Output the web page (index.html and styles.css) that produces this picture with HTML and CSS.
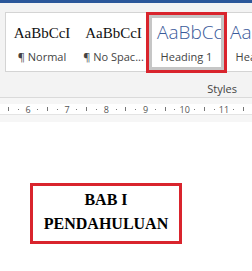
FILE: index.html
```html
<!DOCTYPE html>
<html lang="en">
<head>
    <meta charset="UTF-8">
    <meta name="viewport" content="width=device-width, initial-scale=1.0">
    <title>Styles - Heading 1</title>
    <link rel="stylesheet" href="styles.css">
</head>
<body>
    <!-- Title bar strip -->
    <div class="titlebar"></div>

    <!-- Ribbon: Styles group -->
    <div class="ribbon">
        <div class="gallery">
            <div class="style-item">
                <div class="preview">AaBbCcI</div>
                <div class="label">¶ Normal</div>
            </div>
            <div class="style-item narrow">
                <div class="preview">AaBbCcI</div>
                <div class="label">¶ No Spac...</div>
            </div>
            <div class="style-item selected">
                <div class="preview heading">AaBbCc</div>
                <div class="label">Heading 1</div>
            </div>
            <div class="style-item wide">
                <div class="preview heading">AaBbCc</div>
                <div class="label">Heading 2</div>
            </div>
        </div>
        <div class="group-label">Styles</div>
    </div>

    <!-- Ruler -->
    <div class="ruler-wrap">
        <div class="ruler">
            <span class="mark"><i class="tick"></i></span>
            <span class="mark"><i class="dot"></i></span>
            <span class="mark num">6</span>
            <span class="mark"><i class="dot"></i></span>
            <span class="mark"><i class="tick"></i></span>
            <span class="mark"><i class="dot"></i></span>
            <span class="mark num">7</span>
            <span class="mark"><i class="dot"></i></span>
            <span class="mark"><i class="tick"></i></span>
            <span class="mark"><i class="dot"></i></span>
            <span class="mark num">8</span>
            <span class="mark"><i class="dot"></i></span>
            <span class="mark"><i class="tick"></i></span>
            <span class="mark"><i class="dot"></i></span>
            <span class="mark num">9</span>
            <span class="mark"><i class="dot"></i></span>
            <span class="mark"><i class="tick"></i></span>
            <span class="mark"><i class="dot"></i></span>
            <span class="mark num">10</span>
            <span class="mark"><i class="dot"></i></span>
            <span class="mark"><i class="tick"></i></span>
            <span class="mark"><i class="dot"></i></span>
            <span class="mark num">11</span>
            <span class="mark"><i class="dot"></i></span>
            <span class="mark"><i class="tick"></i></span>
            <span class="mark"><i class="dot"></i></span>
        </div>
    </div>

    <!-- Document page -->
    <div class="page">
        <div class="chapter">BAB I<br>PENDAHULUAN</div>
    </div>
</body>
</html>
```

FILE: styles.css
```css
* {
    margin: 0;
    padding: 0;
    box-sizing: border-box;
}

body {
    width: 252px;
    height: 271px;
    overflow: hidden;
    background: #ffffff;
    font-family: 'Open Sans', 'Noto Sans', sans-serif;
}

.titlebar {
    height: 3px;
    background: #2b579a;
}

/* Ribbon */
.ribbon {
    background: #f3f3f3;
    border-bottom: 1px solid #dadada;
    height: 95px;
    padding-top: 9px;
}

.gallery {
    display: flex;
    height: 60px;
    margin-left: 5px;
    margin-right: -40px;
    padding-top: 2px;
    background: #ffffff;
    border: 1px solid #d4d4d4;
    border-right: none;
}

.style-item {
    width: 72px;
    height: 55px;
    flex-shrink: 0;
    border: 3px solid transparent;
    text-align: center;
}

.style-item.narrow {
    width: 71px;
}

.style-item.selected {
    width: 75px;
    border-color: #c6c6c6;
    outline: 3px solid #d9242d;
}

.style-item.wide {
    width: 75px;
}

.preview {
    margin-top: 4px;
    height: 22px;
    line-height: 22px;
    font-family: 'Liberation Serif', 'Times New Roman', serif;
    font-size: 15px;
    color: #111111;
    white-space: nowrap;
    overflow: hidden;
}

.preview.heading {
    margin-top: 3px;
    height: 23px;
    font-family: 'Open Sans', 'Noto Sans', sans-serif;
    font-weight: 300;
    font-size: 19px;
    color: #3a5a9a;
    text-align: left;
    padding: 0 4px 0 5px;
}

.style-item.wide .preview.heading {
    padding-left: 3px;
}

.label {
    margin-top: 5px;
    line-height: 16px;
    font-size: 11px;
    color: #444444;
    white-space: nowrap;
}

.group-label {
    margin-top: 9px;
    padding-right: 15px;
    text-align: right;
    line-height: 16px;
    font-size: 11px;
    color: #444444;
}

/* Ruler */
.ruler-wrap {
    padding: 6px 0 7px;
    background: #f6f6f6;
}

.ruler {
    display: flex;
    height: 11px;
    padding-left: 3.5px;
    background: #ffffff;
    border-bottom: 1px solid #e4e4e4;
}

.mark {
    width: 9.8px;
    flex-shrink: 0;
    display: flex;
    align-items: center;
    justify-content: center;
}

.mark.num {
    font-size: 9px;
    line-height: 11px;
    color: #555555;
}

.tick {
    display: block;
    width: 1px;
    height: 4px;
    background: #777777;
}

.dot {
    display: block;
    width: 1px;
    height: 1px;
    background: #777777;
}

/* Page */
.page {
    padding: 61px 0 0 30px;
}

.chapter {
    width: 152px;
    border: 3px solid #d9242d;
    padding: 2px 0 5px;
    text-align: center;
    font-family: 'Liberation Serif', 'Times New Roman', serif;
    font-weight: 700;
    font-size: 16px;
    line-height: 24px;
    color: #000000;
}
```
